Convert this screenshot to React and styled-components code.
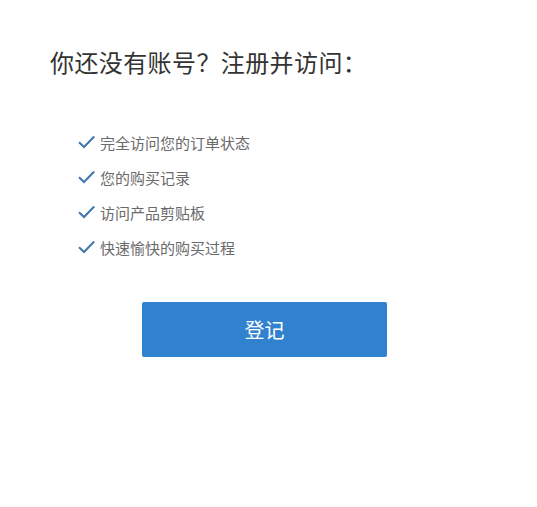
import React from 'react';
import styled, { createGlobalStyle } from 'styled-components';

const GlobalStyle = createGlobalStyle`
  html, body {
    margin: 0;
    padding: 0;
    background: #fff;
  }
  body {
    font-family: "Noto Sans CJK SC", "Noto Sans", sans-serif;
  }
`

const Page = styled.div`
  width: 537px;
  height: 507px;
  box-sizing: border-box;
  padding: 46px 0 0 50px;
`
const Title = styled.h2`
  margin: 0;
  font-size: 24px;
  line-height: 32px;
  font-weight: 400;
  color: #333;
  letter-spacing: 0.4px;
`
const Benefits = styled.ul`
  list-style: none;
  margin: 0;
  padding: 0 0 0 28px;
  margin-top: 53px;
  display: flex;
  flex-direction: column;
  gap: 13px;
`
const Benefit = styled.li`
  display: flex;
  align-items: center;
  gap: 5px;
  height: 22px;
  font-size: 15px;
  color: #6a6a6a;
  & svg {
    width: 17px;
    height: 14px;
    flex: none;
  }
`
const ButtonRow = styled.div`
  margin-top: 44px;
  padding-left: 92px;
`
const LoginButton = styled.button`
  width: 245px;
  height: 55px;
  border: none;
  border-radius: 2px;
  background: #3182ce;
  color: #fff;
  font-family: inherit;
  font-size: 20px;
  cursor: pointer;
`

const Check = () => (
  <svg viewBox="0 0 17 14">
    <path d="M1 7.2 L6 12 L16.2 1.5" fill="none" stroke="#3f77ad" strokeWidth="2" />
  </svg>
)

const items = [
  '完全访问您的订单状态',
  '您的购买记录',
  '访问产品剪贴板',
  '快速愉快的购买过程',
]

export default function App() {
  return (
    <Page>
      <GlobalStyle />
      <Title>你还没有账号？注册并访问：</Title>
      <Benefits>
        {items.map(t => (
          <Benefit key={t}>
            <Check />
            {t}
          </Benefit>
        ))}
      </Benefits>
      <ButtonRow>
        <LoginButton>登记</LoginButton>
      </ButtonRow>
    </Page>
  )
}
